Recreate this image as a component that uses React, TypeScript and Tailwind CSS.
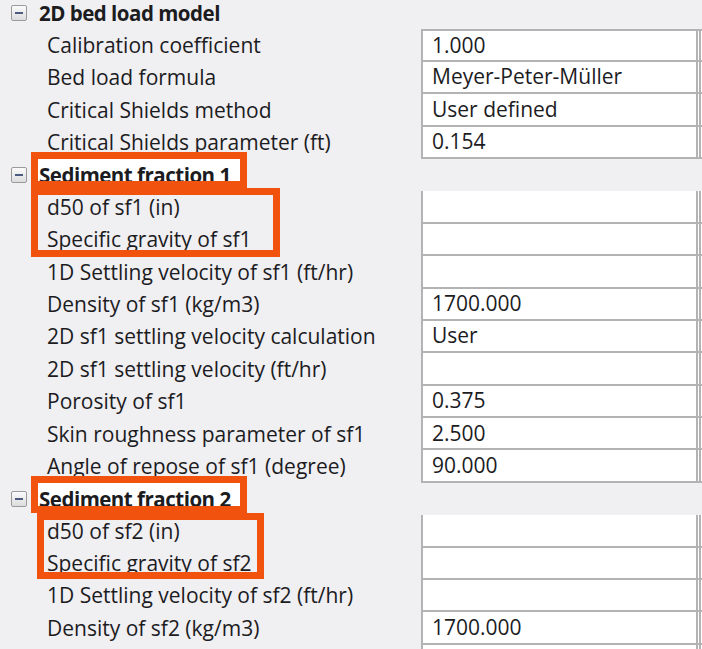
import React from 'react';

type Row =
  | { kind: 'group'; label: string }
  | { kind: 'prop'; label: string; value?: string; first?: boolean };

const rows: Row[] = [
  { kind: 'group', label: '2D bed load model' },
  { kind: 'prop', label: 'Calibration coefficient', value: '1.000', first: true },
  { kind: 'prop', label: 'Bed load formula', value: 'Meyer-Peter-Müller' },
  { kind: 'prop', label: 'Critical Shields method', value: 'User defined' },
  { kind: 'prop', label: 'Critical Shields parameter (ft)', value: '0.154' },
  { kind: 'group', label: 'Sediment fraction 1' },
  { kind: 'prop', label: 'd50 of sf1 (in)' },
  { kind: 'prop', label: 'Specific gravity of sf1' },
  { kind: 'prop', label: '1D Settling velocity of sf1 (ft/hr)' },
  { kind: 'prop', label: 'Density of sf1 (kg/m3)', value: '1700.000' },
  { kind: 'prop', label: '2D sf1 settling velocity calculation', value: 'User' },
  { kind: 'prop', label: '2D sf1 settling velocity (ft/hr)' },
  { kind: 'prop', label: 'Porosity of sf1', value: '0.375' },
  { kind: 'prop', label: 'Skin roughness parameter of sf1', value: '2.500' },
  { kind: 'prop', label: 'Angle of repose of sf1 (degree)', value: '90.000' },
  { kind: 'group', label: 'Sediment fraction 2' },
  { kind: 'prop', label: 'd50 of sf2 (in)' },
  { kind: 'prop', label: 'Specific gravity of sf2' },
  { kind: 'prop', label: '1D Settling velocity of sf2 (ft/hr)' },
  { kind: 'prop', label: 'Density of sf2 (kg/m3)', value: '1700.000' },
  { kind: 'prop', label: '' },
];

// small "⊟" collapse box used by the tree
function CollapseBox() {
  return (
    <div className="ml-[11px] flex h-[16px] w-[16px] shrink-0 items-center justify-center rounded-[2px] border border-[#9a9a9a] bg-gradient-to-b from-[#fbfbfb] to-[#dcdcdc]">
      <div className="h-[2px] w-[8px] bg-[#4a5a80]" />
    </div>
  );
}

// annotation boxes drawn over the grid
const marks = [
  { left: 31, top: 152, w: 216, h: 36, fill: true },
  { left: 31, top: 188, w: 249, h: 69, fill: false },
  { left: 31, top: 476, w: 216, h: 37, fill: true },
  { left: 37, top: 513, w: 227, h: 66, fill: false },
];

export default function App() {
  return (
    <div className="relative h-[649px] w-[702px] overflow-hidden bg-[#f0eff2] font-['Open_Sans',sans-serif] text-[21px] text-[#1c1c1f]">
      {/* white fill behind the header annotations */}
      {marks.filter((m) => m.fill).map((m, i) => (
        <div
          key={'f' + i}
          className="absolute z-0 bg-white"
          style={{ left: m.left, top: m.top, width: m.w, height: m.h }}
        />
      ))}

      <div className="relative z-10 mt-[-3px] flex flex-col">
        {rows.map((r, i) =>
          r.kind === 'group' ? (
            <div key={i} className="flex h-[32.4px] items-center">
              <CollapseBox />
              <span className="ml-[12px] text-[20.5px] font-bold tracking-[-0.5px] whitespace-nowrap">{r.label}</span>
            </div>
          ) : (
            <div key={i} className="flex h-[32.4px]">
              <div className="flex w-[421px] items-center pl-[47px] whitespace-nowrap">{r.label}</div>
              <div
                className={`flex w-[281px] border-b-2 border-[#b3b3b3] bg-white ${r.first ? 'border-t-2' : ''}`}
              >
                <div className="flex w-[277px] items-center border-x-2 border-[#b3b3b3] pl-[9px]">
                  {r.value}
                </div>
                <div className="ml-[1px] w-[2px] bg-[#b3b3b3]" />
              </div>
            </div>
          )
        )}
      </div>

      {/* orange highlight frames */}
      {marks.map((m, i) => (
        <div
          key={'m' + i}
          className="absolute z-20 border-[7px] border-[#f1530e]"
          style={{ left: m.left, top: m.top, width: m.w, height: m.h }}
        />
      ))}
    </div>
  );
}
